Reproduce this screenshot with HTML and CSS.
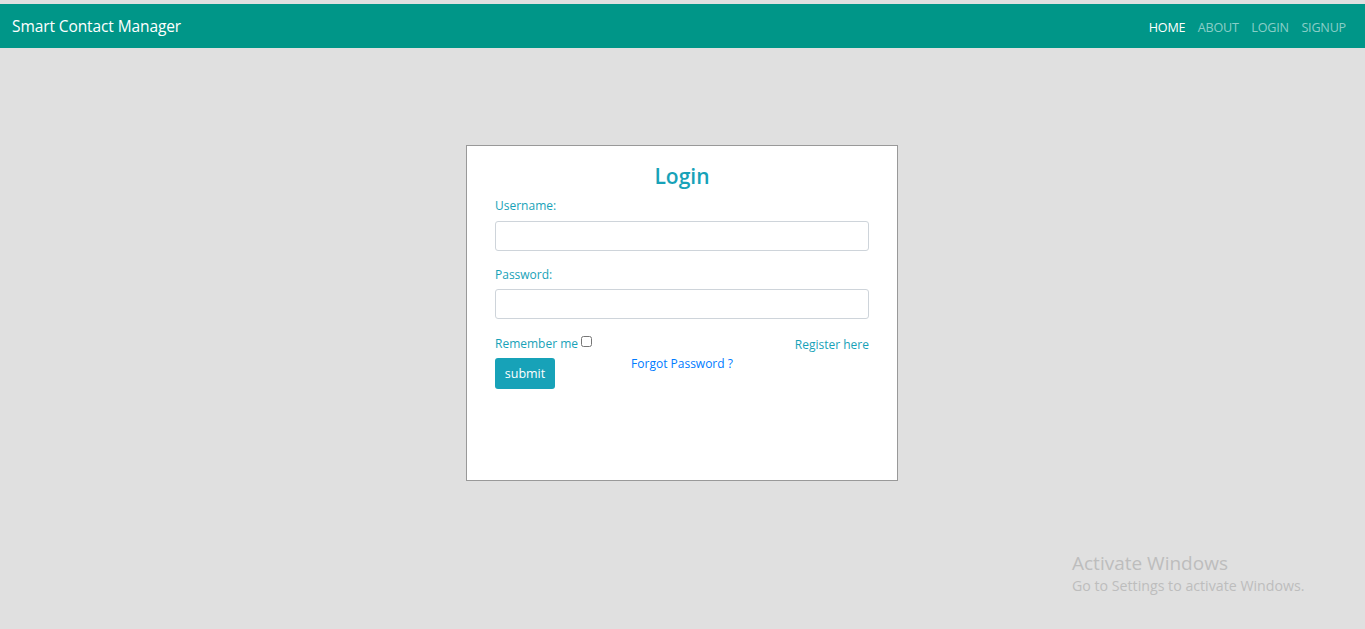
FILE: index.html
```html
<!DOCTYPE html>
<html lang="en">
<head>
<meta charset="utf-8">
<title>Smart Contact Manager</title>
<link rel="stylesheet" href="styles.css">
</head>
<body>
<nav class="navbar">
  <a class="brand" href="#">Smart Contact Manager</a>
  <ul class="nav-links">
    <li><a class="active" href="#">HOME</a></li>
    <li><a href="#">ABOUT</a></li>
    <li><a href="#">LOGIN</a></li>
    <li><a href="#">SIGNUP</a></li>
  </ul>
</nav>
<main class="page">
  <div class="card">
    <h1 class="title">Login</h1>
    <form class="form">
      <label class="label" for="u">Username:</label>
      <input class="input" id="u" type="text">
      <label class="label label-pw" for="p">Password:</label>
      <input class="input" id="p" type="password">
      <div class="row">
        <div class="left">
          <label class="remember">Remember me <input class="check" type="checkbox"></label>
          <button class="btn" type="button">submit</button>
        </div>
        <a class="forgot" href="#">Forgot Password ?</a>
        <a class="register" href="#">Register here</a>
      </div>
    </form>
  </div>
</main>
<div class="watermark">
  <div class="wm-title">Activate Windows</div>
  <div class="wm-sub">Go to Settings to activate Windows.</div>
</div>
</body>
</html>
```
FILE: styles.css
```css
* { box-sizing: border-box; }
html, body { margin: 0; height: 100%; }
body {
  background: #e0e0e0;
  padding-top: 4px;
  font-family: "Open Sans", "Noto Sans", sans-serif;
  overflow: hidden;
}
.navbar {
  height: 44px;
  background: #009688;
  display: flex;
  align-items: center;
  justify-content: space-between;
  padding: 0 19px 0 12px;
}
.brand {
  color: #fff;
  text-decoration: none;
  font-size: 15.5px;
  letter-spacing: -0.1px;
}
.nav-links {
  list-style: none;
  display: flex;
  gap: 12.5px;
  margin: 0;
  padding: 0;
}
.nav-links a {
  color: rgba(255,255,255,0.55);
  text-decoration: none;
  font-size: 12.6px;
  letter-spacing: -0.2px;
}
.nav-links a.active { color: #fff; }
.page {
  display: flex;
  justify-content: center;
  padding-top: 97px;
  padding-right: 1px;
}
.card {
  width: 432px;
  height: 336px;
  background: #fff;
  border: 1px solid #999;
  padding: 14px 28px 0 28px;
}
.title {
  margin: 0;
  text-align: center;
  color: #17a2b8;
  font-size: 21px;
  font-weight: 600;
  line-height: 32px;
}
.form { display: flex; flex-direction: column; }
.label {
  color: #17a2b8;
  font-size: 12px;
  line-height: 18px;
  margin-top: 5px;
  margin-bottom: 6px;
}
.label-pw { margin-bottom: 5px; }
.label + .input { margin-bottom: 10px; }
.label-pw + .input { margin-bottom: 11px; }
.input {
  height: 30px;
  border: 1px solid #ced4da;
  border-radius: 3px;
  width: 100%;
}
.row {
  display: flex;
  justify-content: space-between;
  margin-top: 5px;
  position: relative;
}
.left { display: flex; flex-direction: column; align-items: flex-start; }
.remember {
  color: #17a2b8;
  font-size: 12px;
  line-height: 18px;
  display: flex;
  align-items: flex-start;
}
.check {
  width: 11px;
  height: 11px;
  margin: 1px 0 0 3px;
}
.btn {
  margin-top: 5px;
  width: 60px;
  height: 31px;
  background: #17a2b8;
  color: #fff;
  border: none;
  border-radius: 3px;
  font-family: inherit;
  font-size: 12.5px;
  padding: 0;
}
.forgot {
  color: #007bff;
  text-decoration: none;
  font-size: 12px;
  margin-top: 20px;
  line-height: 18px;
  position: absolute;
  left: 50%;
  transform: translateX(-50%);
}
.register {
  color: #17a2b8;
  text-decoration: none;
  font-size: 12px;
  line-height: 18px;
  margin-top: 1px;
}
.watermark {
  position: absolute;
  left: 1072px;
  top: 550px;
  color: #bdbdbd;
}
.wm-title { font-size: 19px; line-height: 26px; }
.wm-sub { font-size: 14.2px; line-height: 20px; }
```
